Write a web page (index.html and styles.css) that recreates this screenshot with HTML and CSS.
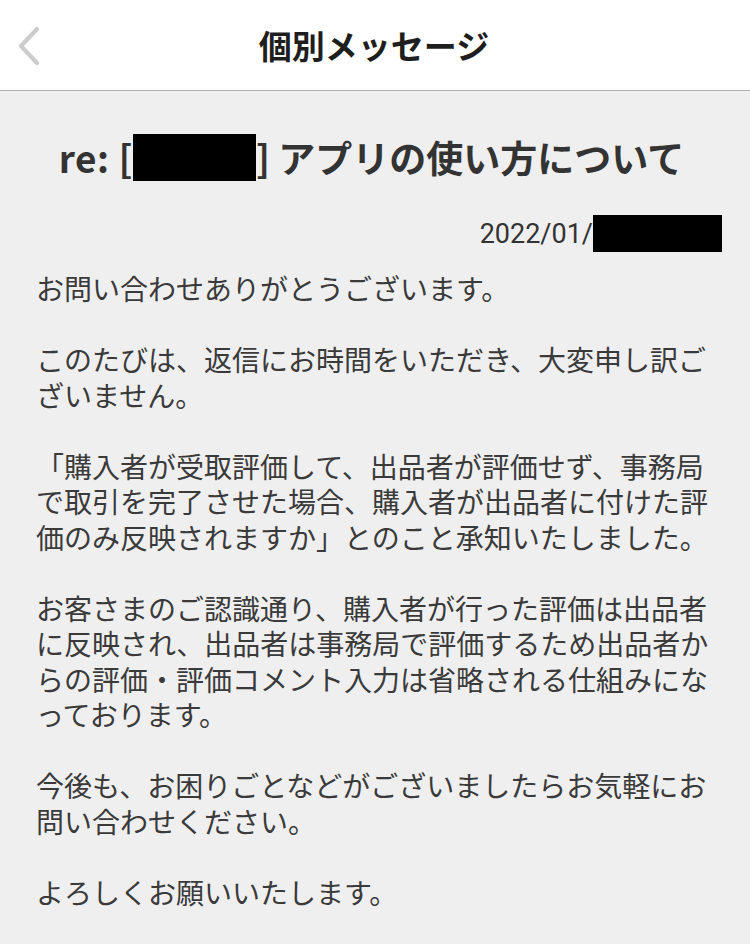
FILE: index.html
```html
<!DOCTYPE html>
<html lang="ja">
<head>
<meta charset="utf-8">
<title>個別メッセージ</title>
<link rel="stylesheet" href="styles.css">
</head>
<body>
<header class="nav">
  <a class="back" href="#" aria-label="戻る">
    <svg width="30" height="44" viewBox="0 0 30 44"><polyline points="24,5 8,22 24,39" fill="none" stroke="#cccccc" stroke-width="4.2" stroke-linecap="round" stroke-linejoin="round"/></svg>
  </a>
  <h1 class="nav-title">個別メッセージ</h1>
</header>
<main class="content">
  <h2 class="subject"><span>re: [</span><span class="redact redact-subject"></span><span>] アプリの使い方について</span></h2>
  <div class="date"><span>2022/01/</span><span class="redact redact-date"></span></div>
  <div class="message">
    <p><span class="ln">お問い合わせありがとうございます。</span></p>
    <p><span class="ln">このたびは、返信にお時間をいただき、大変申し訳ご</span><span class="ln">ざいません。</span></p>
    <p><span class="ln">「購入者が受取評価して、出品者が評価せず、事務局</span><span class="ln">で取引を完了させた場合、購入者が出品者に付けた評</span><span class="ln">価のみ反映されますか」とのこと承知いたしました。</span></p>
    <p><span class="ln">お客さまのご認識通り、購入者が行った評価は出品者</span><span class="ln">に反映され、出品者は事務局で評価するため出品者か</span><span class="ln">らの評価・評価コメント入力は省略される仕組みにな</span><span class="ln">っております。</span></p>
    <p><span class="ln">今後も、お困りごとなどがございましたらお気軽にお</span><span class="ln">問い合わせください。</span></p>
    <p><span class="ln">よろしくお願いいたします。</span></p>
  </div>
</main>
</body>
</html>
```
FILE: styles.css
```css
html, body {
  margin: 0;
  padding: 0;
}
body {
  width: 750px;
  height: 944px;
  overflow: hidden;
  background: #efefef;
  font-family: "Noto Sans CJK JP", "Noto Sans", sans-serif;
  color: #333333;
}
.nav {
  position: relative;
  height: 90px;
  background: #ffffff;
  border-bottom: 1px solid #b3b3b3;
  display: flex;
  align-items: center;
  justify-content: center;
}
.back {
  position: absolute;
  left: 13px;
  top: 24px;
  width: 30px;
  height: 44px;
  display: block;
}
.back svg {
  display: block;
}
.nav-title {
  margin: 0 0 0 -2px;
  font-size: 33px;
  font-weight: 700;
  color: #1e1e1e;
  line-height: 1;
}
.content {
  padding: 0 28px 0 36px;
}
.subject {
  margin: 42px 0 0 -15px;
  height: 48px;
  display: flex;
  align-items: center;
  justify-content: center;
  font-size: 37px;
  font-weight: 700;
  color: #333333;
  line-height: 48px;
  white-space: pre;
}
.subject span:first-child {
  letter-spacing: 0.5px;
}
.redact {
  display: inline-block;
  background: #000000;
}
.redact-subject {
  width: 123px;
  height: 47px;
}
.date {
  margin-top: 34px;
  height: 37px;
  display: flex;
  align-items: center;
  justify-content: flex-end;
  font-family: Roboto, "Noto Sans", sans-serif;
  font-size: 27px;
  color: #333333;
}
.redact-date {
  width: 129px;
  height: 37px;
}
.message {
  margin-top: 19px;
  font-size: 28px;
  line-height: 35.5px;
  color: #3a3a3a;
}
.message p {
  margin: 0 0 35.5px;
}
.ln {
  display: block;
  white-space: nowrap;
}
```
